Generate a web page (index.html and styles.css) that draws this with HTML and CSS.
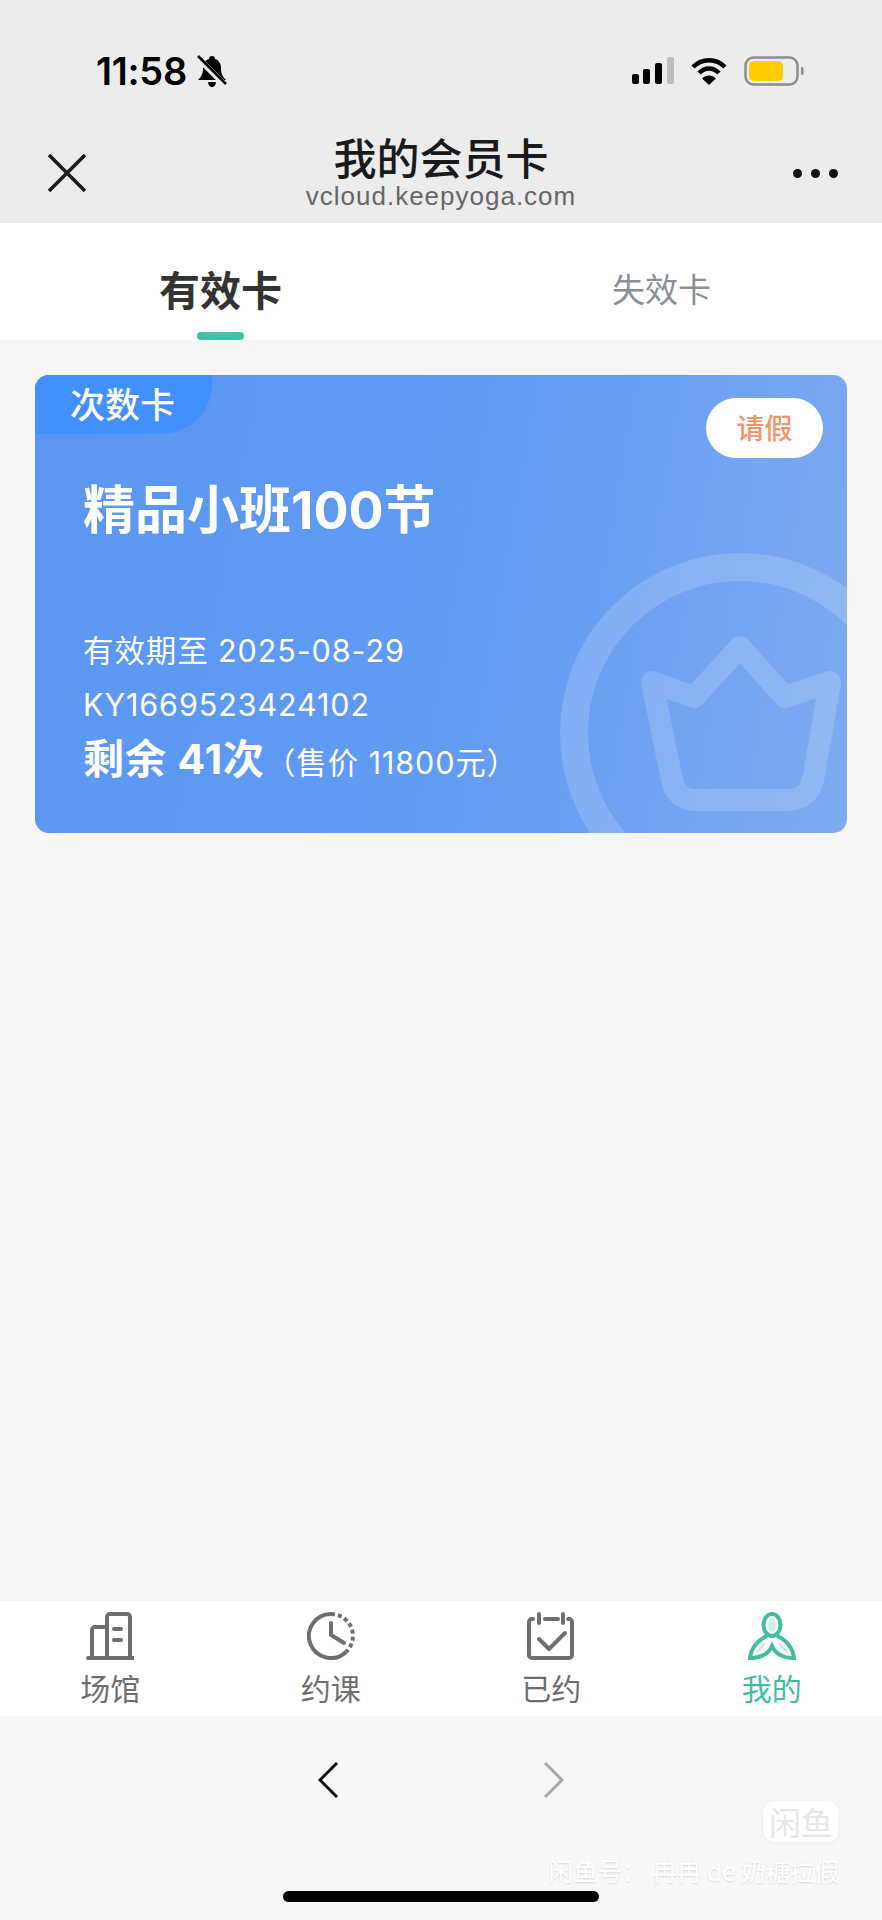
FILE: index.html
```html
<!DOCTYPE html>
<html lang="zh-CN">
<head>
    <meta charset="UTF-8">
    <meta name="viewport" content="width=device-width, initial-scale=1.0">
    <title>我的会员卡</title>
    <link rel="stylesheet" href="styles.css">
</head>
<body>
    <div class="page">
        <header class="top">
            <div class="status">
                <div class="status-left">
                    <span class="time">11:58</span>
                    <svg class="bell" viewBox="0 0 30 32">
                        <path d="M15 1c2 0 3 1 3 3 4 1 6 5 6 9 0 5 1 8 5 12H1c4-4 5-7 5-12 0-4 2-8 6-9 0-2 1-3 3-3z" fill="#000"/>
                        <path d="M11 27h8c0 3-2 5-4 5s-4-2-4-5z" fill="#000"/>
                        <path d="M1 3 29 31" stroke="#ececec" stroke-width="6"/>
                        <path d="M1 1 29 29" stroke="#000" stroke-width="2.5"/>
                    </svg>
                </div>
                <div class="status-right">
                    <svg class="signal" viewBox="0 0 42 28">
                        <rect x="0" y="17" width="7" height="10" rx="2" fill="#000"/>
                        <rect x="11" y="12" width="7" height="15" rx="2" fill="#000"/>
                        <rect x="23" y="6" width="7" height="21" rx="2" fill="#000"/>
                        <rect x="35" y="0" width="7" height="27" rx="2" fill="#bdbdbd"/>
                    </svg>
                    <svg class="wifi" viewBox="0 0 36 28">
                        <path d="M2 10C11 1 25 1 34 10" fill="none" stroke="#000" stroke-width="4.5"/>
                        <path d="M8 16C14 10 22 10 28 16" fill="none" stroke="#000" stroke-width="4.5"/>
                        <path d="M11 21.500C15 17.500 21 17.500 25 21.500L18 28z" fill="#000"/>
                    </svg>
                    <svg class="battery" viewBox="0 0 60 30">
                        <rect x="1.500" y="1.500" width="52" height="27" rx="8" fill="none" stroke="#8c8c8c" stroke-width="2.500"/>
                        <rect x="5" y="5" width="34" height="20" rx="5" fill="#ffcc00"/>
                        <rect x="57" y="11" width="2.500" height="8" rx="1" fill="#8c8c8c"/>
                    </svg>
                </div>
            </div>
            <nav class="nav">
                <svg class="close" viewBox="0 0 38 38">
                    <path d="M1 1 37 37M37 1 1 37" stroke="#1a1a1a" stroke-width="3.500" fill="none"/>
                </svg>
                <div class="nav-title">
                    <div class="title">我的会员卡</div>
                    <div class="domain">vcloud.keepyoga.com</div>
                </div>
                <div class="more"><span></span><span></span><span></span></div>
            </nav>
        </header>

        <div class="tabs">
            <div class="tab active">有效卡</div>
            <div class="tab">失效卡</div>
        </div>

        <main class="content">
            <section class="card">
                <svg class="card-deco" viewBox="0 0 812 458">
                    <circle cx="705" cy="358" r="166" fill="none" stroke="#fff" stroke-opacity="0.17" stroke-width="28"/>
                    <path d="M617 307 659 322 705 272 750 322 795 307 779 400Q775 425 752 425H660Q640 425 636 400z" fill="none" stroke="#fff" stroke-opacity="0.17" stroke-width="22" stroke-linejoin="round"/>
                </svg>
                <div class="card-head">
                    <span class="card-type">次数卡</span>
                    <span class="leave-btn">请假</span>
                </div>
                <div class="card-body">
                    <h2 class="card-name">精品小班100节</h2>
                    <div class="card-info">
                        <div class="info-line">有效期至 2025-08-29</div>
                        <div class="info-line">KY1669523424102</div>
                        <div class="info-line"><strong class="remain">剩余 41次</strong><span class="price">（售价 11800元）</span></div>
                    </div>
                </div>
            </section>
        </main>

        <div class="tabbar">
            <div class="tabbar-item">
                <svg class="tabbar-icon" viewBox="0 0 48 48" fill="none" stroke="#6e6e6e" stroke-width="4" stroke-linecap="round">
                    <path d="M2 46H47M21 46V5a3 3 0 0 1 3-3H41a3 3 0 0 1 3 3V46M21 15H9a3 3 0 0 0-3 3V46M28 17H35M28 28H35"/>
                </svg>
                <span>场馆</span>
            </div>
            <div class="tabbar-item">
                <svg class="tabbar-icon" viewBox="0 0 48 48" fill="none" stroke="#6e6e6e" stroke-width="4">
                    <path d="M39 40A22 22 0 1 1 24 2"/>
                    <path d="M24 2A22 22 0 0 1 39 40" stroke-dasharray="4 3"/>
                    <path d="M24 11V23L37 31" stroke-linecap="round"/>
                </svg>
                <span>约课</span>
            </div>
            <div class="tabbar-item">
                <svg class="tabbar-icon" viewBox="0 0 48 48" fill="none" stroke="#6e6e6e" stroke-width="4" stroke-linecap="round" stroke-linejoin="round">
                    <path d="M6 7H5a3 3 0 0 0-3 3V43a3 3 0 0 0 3 3H42a3 3 0 0 0 3-3V10a3 3 0 0 0-3-3H41"/>
                    <path d="M12 2V11M36 2V11M18 7H31M12 27 22 37 38 21"/>
                </svg>
                <span>已约</span>
            </div>
            <div class="tabbar-item is-active">
                <svg class="tabbar-icon" viewBox="0 0 48 48" fill="none" stroke="#43bd9f" stroke-width="4">
                    <ellipse cx="24" cy="13" rx="8.500" ry="11"/>
                    <ellipse cx="24" cy="13" rx="4" ry="7" fill="#43bd9f" fill-opacity="0.25" stroke="none"/>
                    <path d="M19 24C9 28 3 37 2 46C12 46 20 43 24 34C28 43 36 46 46 46C45 37 39 28 29 24"/>
                    <path d="M8 41C10 36 13 33 17 31C16 36 13 39 8 41zM40 41C38 36 35 33 31 31C32 36 35 39 40 41z" fill="#43bd9f" fill-opacity="0.3" stroke="none"/>
                </svg>
                <span>我的</span>
            </div>
        </div>

        <footer class="browser">
            <div class="arrows">
                <svg class="arrow" viewBox="0 0 20 36"><path d="M19 1 2 18 19 35" fill="none" stroke="#111" stroke-width="3"/></svg>
                <svg class="arrow" viewBox="0 0 20 36"><path d="M1 1 18 18 1 35" fill="none" stroke="#a8a8a8" stroke-width="3"/></svg>
            </div>
            <div class="home-bar"></div>
        </footer>

        <div class="watermark">
            <div class="wm-logo">闲鱼</div>
            <div class="wm-text">闲鱼号： 冉冉 de 奶糖拉假</div>
        </div>
    </div>
</body>
</html>
```

FILE: styles.css
```css
* {
    box-sizing: border-box;
}
body {
    margin: 0;
    font-family: "Inter", "Noto Sans CJK SC", sans-serif;
    background-color: #f6f6f6;
}
.page {
    position: relative;
    display: flex;
    flex-direction: column;
    height: 1920px;
    overflow: hidden;
}
.top {
    height: 223px;
    background-color: #ececec;
}
.status {
    display: flex;
    justify-content: space-between;
    align-items: center;
    height: 130px;
    padding: 12px 78px 0 96px;
}
.status-left,
.status-right {
    display: flex;
    align-items: center;
}
.time {
    font-size: 38px;
    font-weight: 600;
    letter-spacing: -0.3px;
    color: #000;
}
.bell {
    width: 30px;
    height: 32px;
    margin-left: 10px;
}
.signal {
    width: 42px;
    height: 28px;
}
.wifi {
    width: 36px;
    height: 28px;
    margin-left: 17px;
}
.battery {
    width: 60px;
    height: 30px;
    margin-left: 17px;
}
.nav {
    display: grid;
    grid-template-columns: 100px 1fr 100px;
    padding: 1px 48px 0;
}
.close {
    width: 38px;
    height: 38px;
    margin-top: 23px;
}
.nav-title {
    text-align: center;
}
.title {
    font-family: "Noto Sans CJK SC", sans-serif;
    font-size: 43px;
    font-weight: 500;
    line-height: 50px;
    color: #1a1a1a;
}
.domain {
    font-family: "Liberation Sans", sans-serif;
    font-size: 26px;
    letter-spacing: 1px;
    line-height: 30px;
    color: #666;
}
.more {
    display: flex;
    justify-content: flex-end;
    gap: 9px;
    margin: 38px -4px 0 0;
}
.more span {
    width: 9px;
    height: 9px;
    border-radius: 50%;
    background-color: #111;
}
.tabs {
    display: grid;
    grid-template-columns: 1fr 1fr;
    height: 117px;
    background-color: #fff;
}
.tab {
    position: relative;
    padding-top: 37px;
    font-family: "Noto Sans CJK SC", sans-serif;
    font-size: 33px;
    line-height: 56px;
    text-align: center;
    color: #8a8f99;
}
.tab.active {
    font-size: 41px;
    font-weight: 700;
    color: #333;
}
.tab.active::after {
    content: "";
    position: absolute;
    left: 197px;
    bottom: 0;
    width: 47px;
    height: 8px;
    border-radius: 4px;
    background-color: #40c0a5;
}
.content {
    flex: 1;
    padding: 35px;
}
.card {
    position: relative;
    height: 458px;
    overflow: hidden;
    border-radius: 14px;
    background: linear-gradient(100deg, #5b97f2 0%, #5f9af3 50%, #7eabf0 100%);
    color: #fff;
}
.card-deco {
    position: absolute;
    left: 0;
    top: 0;
    width: 812px;
    height: 458px;
}
.card-head {
    position: relative;
    display: flex;
    justify-content: space-between;
    align-items: flex-start;
    height: 83px;
}
.card-type {
    width: 177px;
    height: 59px;
    padding-left: 35px;
    font-family: "Noto Sans CJK SC", sans-serif;
    font-size: 35px;
    font-weight: 500;
    line-height: 56px;
    border-radius: 0 0 50px 0;
    background-color: #4290fd;
}
.leave-btn {
    width: 117px;
    height: 60px;
    margin: 23px 24px 0 0;
    font-family: "Noto Sans CJK SC", sans-serif;
    font-size: 28px;
    font-weight: 500;
    line-height: 58px;
    text-align: center;
    border-radius: 30px;
    background-color: #fff;
    color: #f0956a;
}
.card-body {
    position: relative;
    padding-left: 48px;
}
.card-name {
    margin: 23px 0 0;
    font-family: "Inter", "Noto Sans CJK SC", sans-serif;
    font-size: 52px;
    font-weight: 700;
    line-height: 60px;
}
.card-info {
    margin-top: 83px;
    font-family: "Inter", "Noto Sans CJK SC", sans-serif;
    font-size: 30.500px;
    letter-spacing: 0.900px;
}
.info-line {
    height: 54px;
    line-height: 54px;
    white-space: nowrap;
}
.remain {
    font-size: 41px;
    font-weight: 700;
}
.tabbar {
    display: grid;
    grid-template-columns: repeat(4, 1fr);
    height: 115px;
    background-color: #fff;
}
.tabbar-item {
    display: flex;
    flex-direction: column;
    align-items: center;
    padding-top: 11px;
    font-family: "Noto Sans CJK SC", sans-serif;
    font-size: 30px;
    line-height: 36px;
    color: #6e6e6e;
}
.tabbar-item.is-active {
    color: #43bd9f;
}
.tabbar-icon {
    width: 48px;
    height: 48px;
    margin-bottom: 9px;
}
.browser {
    display: flex;
    flex-direction: column;
    align-items: center;
    height: 204px;
    padding-top: 46px;
    background-color: #f7f7f7;
}
.arrows {
    display: flex;
    gap: 206px;
}
.arrow {
    width: 20px;
    height: 36px;
}
.home-bar {
    width: 316px;
    height: 11px;
    margin-top: 93px;
    border-radius: 6px;
    background-color: #000;
}
.watermark {
    position: absolute;
    right: 43px;
    top: 1801px;
    display: flex;
    flex-direction: column;
    align-items: flex-end;
    gap: 14px;
    font-family: "Noto Sans CJK SC", sans-serif;
}
.wm-logo {
    width: 76px;
    height: 41px;
    font-size: 32px;
    line-height: 40px;
    text-align: center;
    border-radius: 12px;
    background-color: #fff;
    box-shadow: 0 1px 4px rgba(0, 0, 0, 0.06);
    color: #e6e6e6;
}
.wm-text {
    font-size: 24.500px;
    line-height: 30px;
    white-space: nowrap;
    color: #fff;
    text-shadow: 0 1px 2px rgba(0, 0, 0, 0.14);
}
```
